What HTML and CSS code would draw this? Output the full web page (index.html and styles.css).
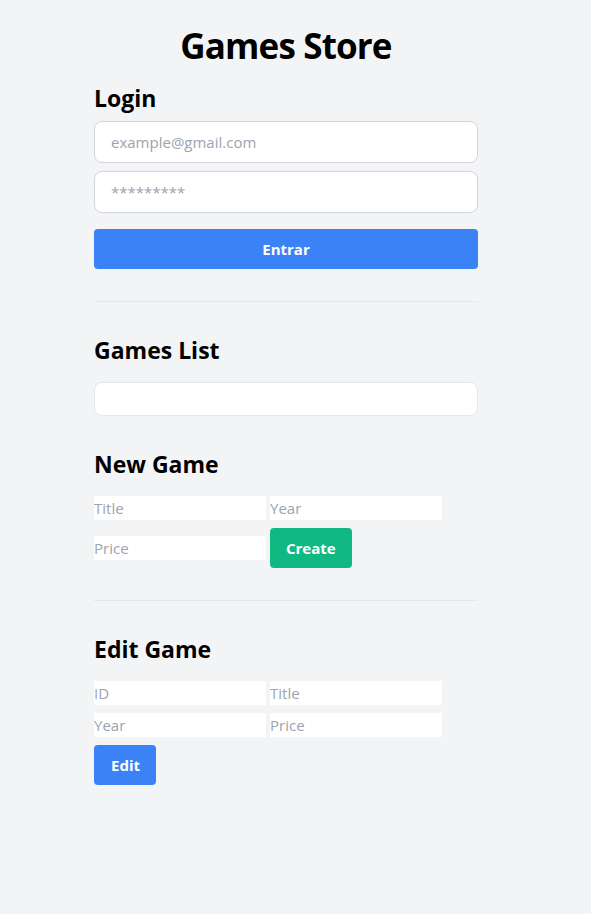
FILE: index.html
```html
<!DOCTYPE html>
<html lang="en">
<head>
<meta charset="utf-8">
<title>Games Store</title>
<link rel="stylesheet" href="styles.css">
</head>
<body>
<div class="page">
  <h1 class="title">Games Store</h1>
  <main class="container">
    <section class="login">
      <h2 class="heading heading-login">Login</h2>
      <input class="field" type="email" placeholder="example@gmail.com">
      <input class="field" type="password" placeholder="*********">
      <button class="btn btn-blue btn-block">Entrar</button>
    </section>
    <hr class="divider">
    <section>
      <h2 class="heading">Games List</h2>
      <ul class="games-list"></ul>
    </section>
    <section>
      <h2 class="heading">New Game</h2>
      <div class="form-row">
        <input class="plain" type="text" placeholder="Title">
        <input class="plain" type="text" placeholder="Year">
        <input class="plain" type="text" placeholder="Price">
        <button class="btn btn-green">Create</button>
      </div>
    </section>
    <hr class="divider">
    <section>
      <h2 class="heading">Edit Game</h2>
      <div class="form-row">
        <input class="plain" type="text" placeholder="ID">
        <input class="plain" type="text" placeholder="Title">
        <input class="plain" type="text" placeholder="Year">
        <input class="plain" type="text" placeholder="Price">
        <button class="btn btn-blue">Edit</button>
      </div>
    </section>
  </main>
</div>
</body>
</html>
```
FILE: styles.css
```css
* { box-sizing: border-box; }
html, body { margin: 0; padding: 0; }
body {
  background: #f3f4f6;
  font-family: "Open Sans", "Noto Sans", sans-serif;
  color: #000;
  min-height: 914px;
}
.page {
  width: 572px;
  padding-top: 26px;
}
.title {
  margin: 0 0 16px;
  font-size: 35px;
  line-height: 40px;
  font-weight: 700;
  text-align: center;
  letter-spacing: -0.85px;
}
.container {
  width: 384px;
  margin: 0 auto;
}
.heading {
  margin: 0 0 16px;
  font-size: 23px;
  line-height: 32px;
  font-weight: 700;
}
.heading-login { margin-bottom: 7px; }
.field {
  display: block;
  width: 100%;
  height: 42px;
  margin: 0 0 8px;
  padding: 8px 16px;
  border: 1px solid #d1d5db;
  border-radius: 8px;
  background: #fff;
  font-family: inherit;
  font-size: 15px;
  outline: none;
}
.field::placeholder, .plain::placeholder { color: #9ca3af; opacity: 1; }
.btn {
  height: 40px;
  padding: 0 16px;
  border: 0;
  border-radius: 4px;
  color: #fff;
  font-family: inherit;
  font-size: 15px;
  font-weight: 700;
  cursor: pointer;
}
.btn-block { display: block; width: 100%; margin-top: 16px; }
.btn-blue { background: #3b82f6; }
.btn-green { background: #10b981; }
.divider {
  margin: 32px 0;
  border: 0;
  border-top: 1px solid #e5e7eb;
  height: 0;
}
.games-list {
  margin: 0 0 32px;
  padding: 0;
  height: 34px;
  background: #fff;
  border: 1px solid #e5e7eb;
  border-radius: 8px;
  list-style: none;
}
.form-row {
  display: flex;
  flex-wrap: wrap;
  align-items: center;
  column-gap: 4px;
  row-gap: 8px;
}
.plain {
  width: 172px;
  height: 24px;
  padding: 0;
  border: 0;
  background: #fff;
  font-family: inherit;
  font-size: 15px;
  outline: none;
}
.btn-blue:not(.btn-block) { padding: 0 16px 0 17px; }
```
